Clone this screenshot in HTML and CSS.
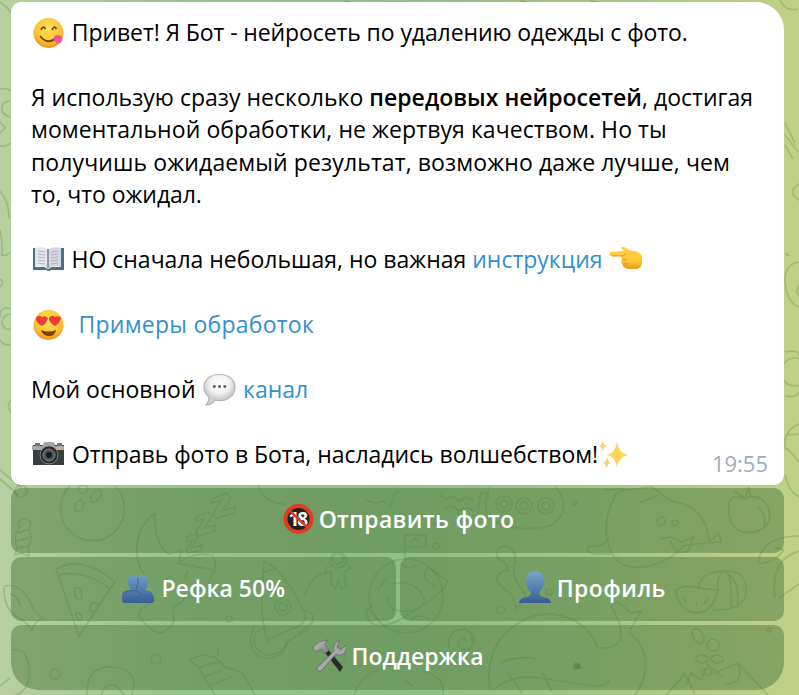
FILE: index.html
```
<!DOCTYPE html>
<html lang="ru">
<head>
    <meta charset="UTF-8">
    <meta name="viewport" content="width=device-width, initial-scale=1.0">
    <title>Чат</title>
    <link rel="stylesheet" href="styles.css">
</head>
<body>
    <svg class="wallpaper" viewBox="0 0 799 695">
        <!-- left edge -->
        <path d="M0 2q8 5 13 14M0 89q8-1 12 2M10 101q-9 0-8 10q2 4 8 6M0 122l5 6-5 5M0 146q6 1 11-3M0 191q9 10 9 28M0 230q3 14 2 25q4 2 8-3M0 279q5 3 0 8M11 309q-11-4-11 8M11 314q-9 1-9 9q2 8 9 6M0 340q5 7 11 4M11 400q-5 6 0 12M0 470l22 18M0 479l18 16"/>
        <!-- right edge -->
        <path d="M780 0q6 12 18 9M785 123l10 20M785 135l13 17M785 145l8 14M799 184q-13 8 0 16M785 253l4 3M799 262q-14 2-14 18q1 22 14 27M799 285l-3 6 3 5M785 352q14-3 14 4M785 396q12 2 14-4M799 424q-18 8-13 26M786 435l13-1M787 448l12 14M785 475q3 16 14 22"/>
        <circle cx="795" cy="372" r="14"/>
        <!-- strip above the message -->
        <path d="M345 0q3 3 5 2M520 0l6 2M590 0l6 2"/>
        <!-- bowling ball -->
        <path d="M70 486a32 32 0 1 0 45 0"/>
        <ellipse cx="96" cy="496" rx="4" ry="7" transform="rotate(35 96 496)"/><ellipse cx="79" cy="506" rx="4" ry="6" transform="rotate(30 79 506)"/><ellipse cx="83" cy="489" rx="5" ry="4"/>
        <!-- candy -->
        <path d="M18 522l5-4 8 4-2 8q5 8-1 18l1 8-8-3-6 2 2-8q-4-10 2-19zM18 533l11-4M17 541l12-3M19 548l10-2"/>
        <circle cx="21" cy="491" r="6"/>
        <!-- sleeping moon -->
        <path d="M155 513q-20 16-18 40q1 14 7 21M155 513q-1 30 13 41l14-4-4 13 35 7q-2 17-19 23q-10 4-13 10l-8 4 1 14q-13 24-33-2q-5-6 3-12l13-8M178 563q10-7 23-9l11 1q6 7 2 18M188 570l-3 8"/>
        <path d="M214 498l12-5 5 5-8 12 13-3-2 6-18 5-3-4 8-14-10 3zM197 516l11-4 4 4-8 12 12-3-1 6-17 5-2-5 8-12-8 2zM187 537l9-3 2 4-7 10 11-3-1 5-13 3-2-4 7-9-7 2z"/>
        <!-- pizza -->
        <path d="M56 569q27-15 59 13l-5 7q-25-20-52-14zM58 575l21 61 31-47M75 589q6-4 7 5q0 8-5 5q-4-4-2-10zM92 603q8-2 5 6q-7 6-7-1zM76 612q7 2 6 8q-6 2-6-8"/>
        <!-- fish -->
        <path d="M4 586q20-4 30 25q5 4 10 7-9 2-12 12-8-10-11-11-18-8-17-33M10 594q9 2 10 12"/>
        <!-- rocket and astronaut -->
        <path d="M264 561q20 9 40 50q7 12-17 20q-17 7-20 10-8-30-4-60zM263 573l14-5M266 628q-14 3-12 14t15 13q16-2 18-13l22-13M305 610q12 4 7 13l-15 12M304 597q6-22 23-24"/>
        <circle cx="283" cy="607" r="8"/><circle cx="283" cy="607" r="4"/><path d="M254 625q-7 20 2 29t25 0q5-5 6-12"/>
        <circle cx="338" cy="560" r="8"/><circle cx="338" cy="559" r="5"/><path d="M332 566q-9 1-6 7l5-1v12l5 4 2-8 4 9 4-3-2-14 7-4-4-5"/>
        <!-- small dots -->
        <circle cx="229" cy="619" r="3"/><circle cx="156" cy="659" r="5"/><circle cx="55" cy="674" r="5"/><circle cx="436" cy="546" r="3"/><circle cx="575" cy="503" r="2"/><circle cx="501" cy="610" r="4"/><circle cx="549" cy="592" r="3"/><circle cx="769" cy="630" r="2"/><circle cx="340" cy="657" r="6"/>
        <!-- planet -->
        <circle cx="406" cy="596" r="37"/><path d="M401 563q8 9 16 1M428 567l20 14q-4 12-40 34t-42-1q1-5 7-9M428 567q-6 7-1 14l9 6M393 584q18-5 28 9t-12 18q-24 2-21-15M410 620q8-8 20 0M378 590l9-13"/>
        <path d="M405 559v-24h21v12h-21M410 543l5-5 5 5M258 484q6 20 27 20M366 500q9 5 17 1l7 6 5-14 4-2"/>
        <!-- ufo -->
        <path d="M490 486q-12 30 10 38t50 2q24-14 6-39M478 511l3-18q8-2 7 4M440 495l6 4 6-3 7 5 6-4 9 3M444 508l8-2 7 5 8-3 8 3"/>
        <circle cx="504" cy="504" r="8"/><circle cx="504" cy="504" r="4"/><circle cx="524" cy="506" r="8"/><circle cx="524" cy="506" r="4"/><circle cx="546" cy="506" r="8"/><circle cx="546" cy="506" r="4"/>
        <!-- pear with flippers -->
        <path d="M616 494q-16 30-6 55t43 16q20-6 30-19q17-3 38-4l-2-9-10 9q-2-36-38-41l-19-14-27 3zM609 538q-5 9-20 8-5 5 5 8h17M660 539l10-2 12 5 12-6-6 15q-14 5-18-11M604 490l20-1M640 502l20-7"/>
        <circle cx="661" cy="521" r="4"/><circle cx="675" cy="523" r="3"/>
        <!-- apple -->
        <path d="M745 499q-19-10-16 17q5 20 26 16 20-6 13-25-9-16-23-8zM734 491l11 7 4-11 1 9 9 2M757 506q10 9 7 20"/>
        <!-- mandarin -->
        <path d="M676 590q10-6 22-2l20 2q-5 23-23 23-17-3-19-23zM698 588q3-16 26-17t22 21q-2 19-33 18M718 590q-2-15 7-19 8 4 6 38M725 571q17 12 12 37M684 598l2 5M697 601l-1 5M708 597l-4 7"/>
        <!-- right fruit -->
        <path d="M758 563q4-27 41-27M758 563q14 2 26-13M784 550l-9-3M775 598q-5-38 24-47M779 598l20-14"/>
        <!-- octopus trail -->
        <path d="M498 559q-4-12 7-13 12 2 10 18-4 10 3 19l8 13-9 13-5-14q-8-6-16-15 4-11 12-10-1-9-10-11"/>
        <!-- whale -->
        <path d="M490 690q-6-42 24-64t63-4q16 11 20 25 18 4 24-9 1-17-10-31 4-9 13 0l7 6 10-2-12 21q20 17 16 40t-31 43M493 690q18-16 46-12t58 8q10 0 13-7M501 663q16-8 36-4M507 671l15 22M542 672l10 20M572 669l11-2"/>
        <circle class="dot" cx="577" cy="666" r="3"/>
        <!-- spiral -->
        <path d="M449 648q-2-19 16-19 15 9 5 20-13 3-12-8 6-6 8 0M473 646q-1-6-2-9"/>
        <!-- rest of the bottom row -->
        <path d="M12 650q15-4 17 19t-18 28M0 686l10-8M87 695q-1-30 26-28t19 28M101 695q9-21 23 0M189 659l14-4 12 2 8 9 20 7 12 22M189 659q8 7 11 11l15 25M199 668l17-6M204 677l19-7M209 686l22-9M218 656v-8M215 664q7-7 8 1M354 695q7-21 25-25M425 672q20 5 18 23M405 680l8 6M666 695l19-21 10 20M686 685l5-12 10 7 7-15 15 12M714 673l24-10 30 32M738 663q7 21-13 21"/>
        <ellipse cx="698" cy="636" rx="5" ry="8" transform="rotate(-35 698 636)"/><circle cx="713" cy="645" r="6"/><ellipse cx="702" cy="659" rx="6" ry="4"/><ellipse cx="717" cy="659" rx="6" ry="4"/><ellipse cx="707" cy="672" rx="5" ry="3"/>
    </svg>

    <div class="chat">
        <div class="message">
            <p class="l1"><svg class="emoji" viewBox="0 0 34 34"><defs><radialGradient id="face" cx=".5" cy=".35" r=".65"><stop offset="0" stop-color="#ffe35a"/><stop offset=".7" stop-color="#fbc133"/><stop offset="1" stop-color="#ec8e1d"/></radialGradient></defs><circle cx="17.500" cy="17" r="15" fill="url(#face)"/><path d="M10 14q2-5 4.500-1M21 14q2-5 4.500-1" fill="none" stroke="#704313" stroke-width="1.700"/><path d="M9 20q8 10 17 1" fill="none" stroke="#74420f" stroke-width="1.800"/><path d="M23 24q-1-5 4-5 6 1 4 6-4 6-8-1z" fill="#ed5798"/></svg> Привет! Я Бот - нейросеть по удалению одежды с фото.</p>
            <p>&nbsp;</p>
            <p class="l2">Я использую сразу несколько <b>передовых нейросетей</b>, достигая</p>
            <p class="l3">моментальной обработки, не жертвуя качеством. Но ты</p>
            <p class="l4">получишь ожидаемый результат, возможно даже лучше, чем</p>
            <p class="l5">то, что ожидал.</p>
            <p>&nbsp;</p>
            <p class="l6"><svg class="emoji" viewBox="0 0 34 34"><path d="M2 5h2v19h12l1.500 2 1.500-2h11V5h3v22H20q-2 2-5 0H2z" fill="#477189"/><path d="M4 5q8-2 13 1v20q-6-4-13-2z" fill="#e4e5ed"/><path d="M30 5q-7-2-13 1v20q6-4 13-2z" fill="#d5d7e0"/><path d="M17 6v19" stroke="#777d90" stroke-width="1.500"/><path d="M7 8l7 1M7 11l7 1M7 14l7 1M7 17l7 1M7 20l7 1M20 9l7-1M20 12l7-1M20 15l7-1M20 18l7-1M20 21l7-1" stroke="#b3b6c3"/></svg> НО сначала небольшая, но важная <a>инструкция</a> <svg class="emoji" viewBox="0 0 34 34"><defs><linearGradient id="hand" x2="0" y2="1"><stop stop-color="#ffcf43"/><stop offset=".65" stop-color="#ffc936"/><stop offset="1" stop-color="#e8981d"/></linearGradient></defs><path d="M2 9q-2 3 1 4h10l1 4q-2 2 0 4 1 4 6 5h7q6 0 7-5v-8q-2-4-7-5-6 0-9-3-4-2-5-1 0 2 3 4L3 9z" fill="url(#hand)"/><path d="M4 13h10l4-2M14 17h5M16 21h5" fill="none" stroke="#df9423"/></svg></p>
            <p>&nbsp;</p>
            <p class="l7"><svg class="emoji" viewBox="0 0 34 34"><circle cx="17.500" cy="17" r="15" fill="url(#face)"/><path d="M11 18q-7-4-6-8 3-4 6-1 4-2 6 1-1 5-6 8zM24 18q-7-4-6-8 3-4 6-1 4-2 6 1-1 5-6 8z" fill="#ec3c3c"/><path d="M10 22q8 3 15 0-1 6-7 6t-8-6z" fill="#7e410c"/></svg>&nbsp; <a>Примеры обработок</a></p>
            <p>&nbsp;</p>
            <p class="l8">Мой основной <svg class="emoji" viewBox="0 0 34 34"><defs><radialGradient id="bubble" cx=".5" cy=".3"><stop stop-color="#fff"/><stop offset=".65" stop-color="#f1f1f3"/><stop offset="1" stop-color="#cfcfd3"/></radialGradient></defs><path d="M17.500 1.500C8 1.500 2 7 2 14q0 6 5 10 0 5-3 8 6 0 9-5 8 2 14-2 6-4 6-11c0-7-6-12.500-15.500-12.500z" fill="url(#bubble)" stroke="#b4b4b8" stroke-width="1.200"/><path d="M11 13.500h2.600M16.200 13.500h2.600M21.500 13.500h2.600" stroke="#555" stroke-width="2.600"/></svg> <a>канал</a></p>
            <p>&nbsp;</p>
            <p class="l9"><svg class="emoji" viewBox="0 0 34 34"><path d="M2 7h10l2-3h8l2 3h9v20H2z" fill="#393c3e"/><path d="M1 8h10l3-4h8l2 4h9v4H1z" fill="#a5a9aa"/><path d="M4 5h5v3H4zM26 5h5v3h-5z" fill="#727578"/><path d="M25 9h6v3h-6z" fill="#ceb08c"/><circle cx="18" cy="17" r="9" fill="#252728" stroke="#808485"/><circle cx="18" cy="17" r="6" fill="#515456" stroke="#858a8d"/><circle cx="18" cy="17" r="3" fill="#151b24"/></svg> Отправь фото в Бота, насладись волшебством!<svg class="emoji" viewBox="0 0 34 34"><path d="M20 3q1 12 11 14-10 2-11 13-1-11-10-13 9-2 10-14z" fill="#ffd657"/><path d="M6 2q0 5 4 6-4 1-4 6-1-5-4-6 3-1 4-6zM10 19q1 5 4 6-4 1-4 6-1-5-4-6 3-1 4-6z" fill="#f6d080"/></svg></p>
            <time class="time">19:55</time>
        </div>

        <div class="keyboard">
            <div class="row">
                <div class="button first"><svg class="emoji" viewBox="0 0 34 34"><circle cx="17.500" cy="17" r="13" fill="#222" stroke="#dc3d23" stroke-width="4"/><text x="7.500" y="24" class="age">18</text><path d="M8 8l19 18" stroke="#dc3d23" stroke-width="2.500"/></svg> <span>Отправить фото</span></div>
            </div>
            <div class="row">
                <div class="button second"><svg class="emoji" viewBox="0 0 34 34"><defs><linearGradient id="person" gradientUnits="userSpaceOnUse" x1="0" y1="0" x2="0" y2="32"><stop stop-color="#78a6cb"/><stop offset="1" stop-color="#375e95"/></linearGradient></defs><path d="M12 4q4 0 5 3 1-3 5-3 6 1 5 8-1 5-3 7 8 1 9 7v3q0 3-3 3H4q-3 0-3-3v-6q2-4 9-4-4-5-3-10 1-5 5-5z" fill="url(#person)"/><path d="M17 7q1 6-2 11M2 22q10-5 17 0t13 2M8 29l13-4" fill="none" stroke="#3e6593" stroke-width="1"/></svg> <span>Рефка 50%</span></div>
                <div class="button third"><svg class="emoji" viewBox="0 0 34 34"><path d="M17 0q9 0 9 10 0 7-5 11 0 4 4 5 8 1 8 6H1q0-5 8-6 4-1 4-5-5-4-5-11 0-10 9-10z" fill="url(#person)"/></svg> <span>Профиль</span></div>
            </div>
            <div class="row">
                <div class="button fourth"><svg class="emoji" viewBox="0 0 34 34"><defs><linearGradient id="steel" x2="1" y2="1"><stop stop-color="#c7c8ce"/><stop offset="1" stop-color="#74767c"/></linearGradient></defs><path d="M11 11l3-3 17 20-3 5z" fill="#292a2d"/><path d="M1 9q6-8 15-8-4 2-3 5l4 5-4 4-4-5-5 3z" fill="url(#steel)" stroke="#65666c" stroke-width=".7"/><path d="M5 29L22 12q-2-6 4-10l2-1-3 7 4 3 5-5q1 8-5 10-3 1-5-1L9 32q-4 1-4-3z" fill="#a8a9ad" stroke="#66676b" stroke-width=".8"/></svg> <span>Поддержка</span></div>
            </div>
        </div>
    </div>
</body>
</html>
```

FILE: styles.css
```
body {
    margin: 0;
    height: 695px;
    overflow: hidden;
    font-family: "Open Sans", "Noto Sans", sans-serif;
    font-size: 23px;
    color: #000;
    background: linear-gradient(to right, #b8cfa2 0, #98c48d 22%, #8fbf87 50%, #a3c686 75%, #c1d088 100%);
}

.wallpaper {
    position: absolute;
    top: 0;
    left: 0;
    width: 799px;
    height: 695px;
    z-index: -1;
    fill: none;
    stroke: #4f8636;
    stroke-opacity: 0.28;
    stroke-width: 1.7;
}

.wallpaper .dot {
    fill: #719b58;
}

.chat {
    width: 773px;
    padding: 2px 0 0 11px;
}

.message {
    display: flex;
    flex-direction: column;
    box-sizing: border-box;
    height: 482.5px;
    padding: 14px 16px 0 20px;
    background: #fff;
    border-radius: 10px 28px 10px 10px;
}

.message p {
    margin: 0;
    line-height: 32.45px;
    height: 32.45px;
    white-space: nowrap;
}

.message a {
    color: #3390d0;
}

.message b {
    font-weight: 600;
}

.message .l1 {
    letter-spacing: -0.1px;
}

.message .l2 {
    letter-spacing: 0.02px;
}

.message .l3 {
    letter-spacing: 0.08px;
}

.message .l4 {
    letter-spacing: 0.11px;
}

.message .l5 {
    letter-spacing: -0.06px;
}

.message .l7 {
    letter-spacing: 0.25px;
}

.message .l9 {
    letter-spacing: -0.04px;
}

.emoji {
    width: 34px;
    height: 34px;
    margin: -4px 0;
    vertical-align: -5px;
}

.message .emoji:first-child {
    margin-right: 1px;
}

.message .l6 .emoji:first-child {
    margin-right: 0.5px;
}

.message .l8 .emoji {
    margin-right: 1.5px;
}

.message .l9 .emoji:last-child {
    margin-left: -1px;
}

.time {
    align-self: flex-end;
    margin-top: -22px;
    line-height: 30px;
    font-size: 22px;
    color: #a0acb6;
}

.keyboard {
    display: flex;
    flex-direction: column;
    gap: 4px;
    padding-top: 3.5px;
}

.row {
    display: flex;
    gap: 4px;
}

.button {
    flex: 1;
    display: flex;
    align-items: center;
    justify-content: center;
    gap: 6px;
    box-sizing: border-box;
    height: 64.5px;
    padding-bottom: 2px;
    font-weight: 600;
    color: #fff;
    background: rgba(79, 121, 63, 0.5);
    border-radius: 10px;
}

.first {
    gap: 4px;
    letter-spacing: 0.36px;
}

.third {
    gap: 5px;
    letter-spacing: 0.4px;
}

.row:last-child .button {
    border-radius: 10px 10px 28px 28px;
}

.age {
    font-size: 19px;
    font-weight: bold;
    letter-spacing: -2px;
    fill: #fff;
    stroke: none;
}
```
